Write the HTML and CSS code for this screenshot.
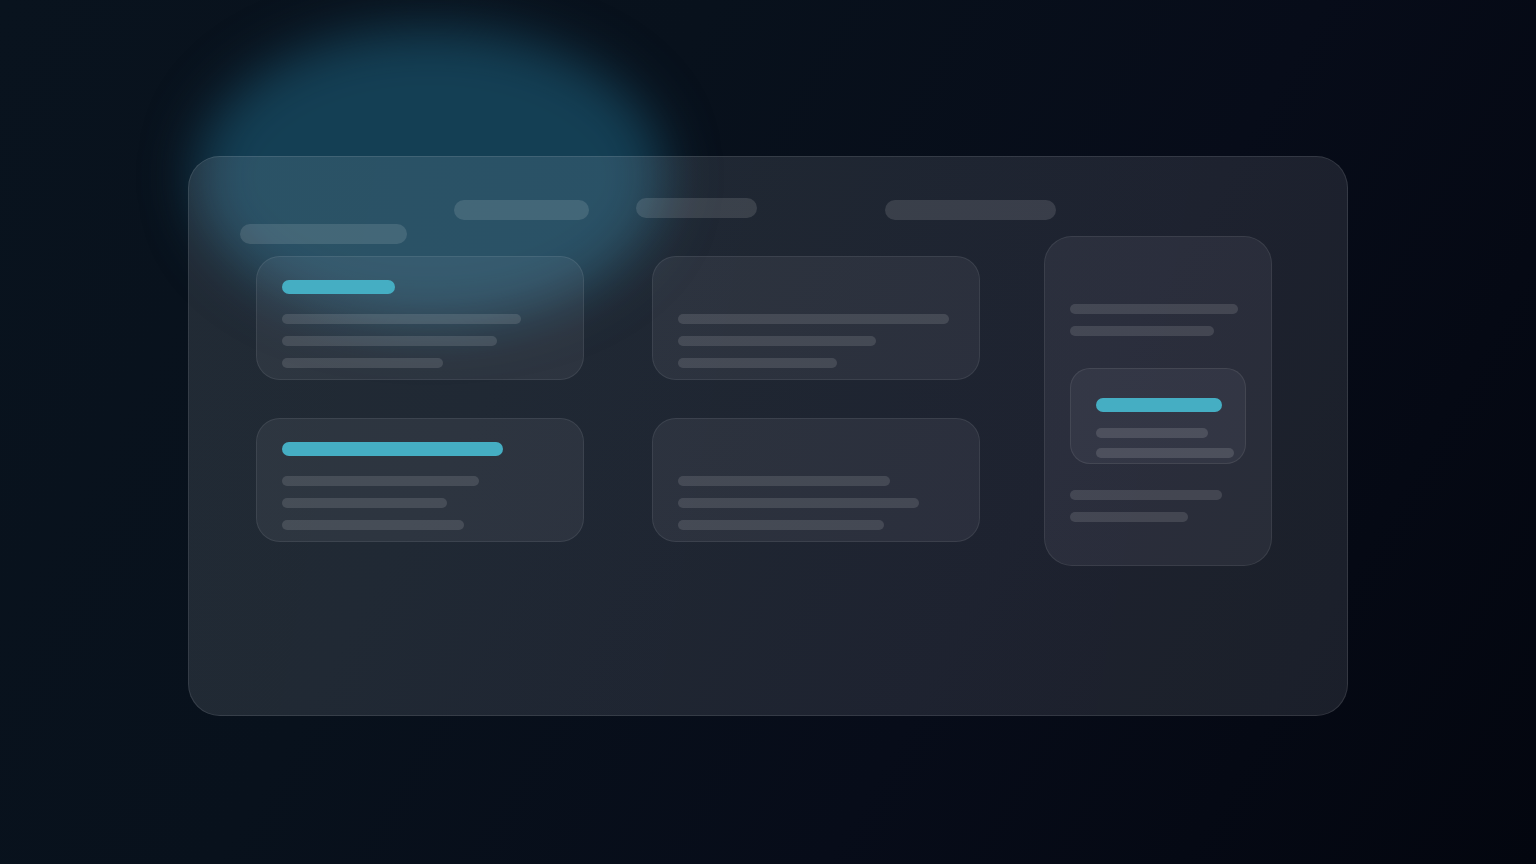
FILE: index.html
```html
<!DOCTYPE html>
<html lang="en">
<head>
<meta charset="utf-8">
<title>Skeleton</title>
<link rel="stylesheet" href="styles.css">
</head>
<body>
<div class="glow"></div>
<main class="stage">
  <section class="panel">
    <header class="header">
      <span class="hbar hbar-1"></span>
      <span class="hbar hbar-2"></span>
      <span class="hbar hbar-3"></span>
      <span class="hbar hbar-4"></span>
    </header>
    <div class="content">
      <div class="grid">
        <div class="card">
          <span class="accent" style="width:113px"></span>
          <span class="line" style="width:239px"></span>
          <span class="line" style="width:215px"></span>
          <span class="line" style="width:161px"></span>
        </div>
        <div class="card">
          <span class="accent ghost" style="width:113px"></span>
          <span class="line" style="width:271px"></span>
          <span class="line" style="width:198px"></span>
          <span class="line" style="width:159px"></span>
        </div>
        <div class="card">
          <span class="accent" style="width:221px"></span>
          <span class="line" style="width:197px"></span>
          <span class="line" style="width:165px"></span>
          <span class="line" style="width:182px"></span>
        </div>
        <div class="card">
          <span class="accent ghost" style="width:221px"></span>
          <span class="line" style="width:212px"></span>
          <span class="line" style="width:241px"></span>
          <span class="line" style="width:206px"></span>
        </div>
      </div>
      <aside class="side">
        <span class="line" style="width:168px"></span>
        <span class="line" style="width:144px"></span>
        <div class="inner">
          <span class="accent" style="width:126px"></span>
          <span class="line" style="width:112px"></span>
          <span class="line" style="width:138px"></span>
        </div>
        <span class="line" style="width:152px"></span>
        <span class="line" style="width:118px"></span>
      </aside>
    </div>
  </section>
</main>
</body>
</html>
```

FILE: styles.css
```css
* { box-sizing: border-box; }
html, body { margin: 0; height: 100%; }
body {
  width: 1536px;
  height: 864px;
  overflow: hidden;
  position: relative;
  font-family: "Inter", "Liberation Sans", sans-serif;
  background: linear-gradient(120deg, #09131e 0%, #08111c 35%, #070c19 65%, #03060f 100%);
}
.glow {
  position: absolute;
  left: 196px;
  top: 28px;
  width: 468px;
  height: 296px;
  border-radius: 50%;
  background: rgba(22, 70, 92, 0.88);
  filter: blur(26px);
}
.stage {
  position: relative;
  padding: 156px 0 0 188px;
}
.panel {
  width: 1160px;
  height: 560px;
  border-radius: 32px;
  background: linear-gradient(100deg, rgba(235,242,255,0.108) 0%, rgba(235,242,255,0.103) 60%, rgba(235,240,255,0.098) 100%);
  border: 1px solid rgba(255,255,255,0.1);
  padding: 41px 0 0 51px;
}
.header {
  display: flex;
  align-items: flex-start;
  height: 46px;
  margin-bottom: -8px;
}
.hbar {
  display: block;
  height: 20px;
  border-radius: 10px;
  background: rgba(255,255,255,0.12);
}
.hbar-1 { width: 167px; margin-top: 26px; }
.hbar-2 { width: 135px; margin-top: 2px; margin-left: 47px; }
.hbar-3 { width: 121px; margin-top: 0; margin-left: 47px; }
.hbar-4 { width: 171px; margin-top: 2px; margin-left: 128px; }
.content {
  display: flex;
  align-items: flex-start;
  margin-left: 16px;
}
.grid {
  display: grid;
  grid-template-columns: 328px 328px;
  column-gap: 68px;
  row-gap: 38px;
  margin-top: 20px;
}
.card {
  height: 124px;
  border-radius: 24px;
  background: rgba(240,245,255,0.062);
  border: 1px solid rgba(255,255,255,0.08);
  padding: 23px 0 0 25px;
  display: flex;
  flex-direction: column;
  align-items: flex-start;
}
.accent {
  display: block;
  height: 14px;
  border-radius: 7px;
  background: #45aec3;
  flex: none;
}
.accent.ghost { visibility: hidden; }
.line {
  display: block;
  height: 10px;
  border-radius: 5px;
  background: rgba(255,255,255,0.12);
  flex: none;
}
.card .accent { margin-bottom: 20px; }
.card .line + .line { margin-top: 12px; }
.side {
  width: 228px;
  height: 330px;
  margin-left: 64px;
  border-radius: 28px;
  background: rgba(240,245,255,0.062);
  border: 1px solid rgba(255,255,255,0.08);
  padding: 67px 0 0 25px;
  display: flex;
  flex-direction: column;
  align-items: flex-start;
}
.side > .line + .line { margin-top: 12px; }
.inner {
  width: 176px;
  height: 96px;
  margin: 32px 0 26px;
  border-radius: 20px;
  background: rgba(240,245,255,0.05);
  border: 1px solid rgba(255,255,255,0.08);
  padding: 29px 0 0 25px;
  display: flex;
  flex-direction: column;
  align-items: flex-start;
}
.inner .accent { margin-bottom: 16px; }
.inner .line + .line { margin-top: 10px; }
.inner .line { background: rgba(255,255,255,0.13); }
```
